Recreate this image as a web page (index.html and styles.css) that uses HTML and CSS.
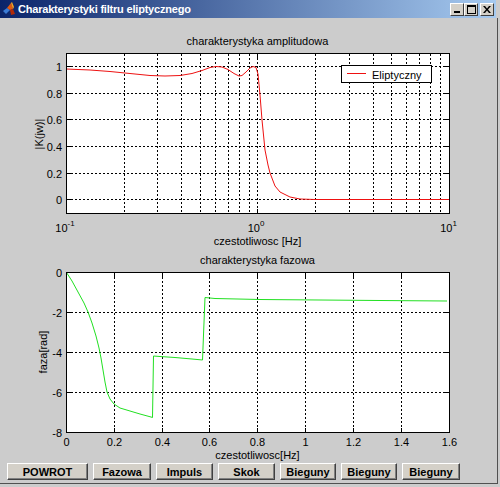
FILE: index.html
```html
<!DOCTYPE html>
<html lang="pl">
<head>
    <meta charset="UTF-8">
    <title>Charakterystyki filtru eliptycznego</title>
    <link rel="stylesheet" href="styles.css">
</head>
<body>
    <div class="window">
        <div class="titlebar">
            <svg class="app-icon" width="14" height="14" viewBox="0 0 14 14">
                <polygon points="1,9 5,6 8,8 4,12" fill="#3a7bd5"/>
                <polygon points="5,6 9,1 11,7 8,8" fill="#e05a10"/>
                <polygon points="8,8 11,7 13,12 9,13" fill="#b02a08"/>
                <polygon points="9,1 10,0 12,5 11,7" fill="#f5a623"/>
            </svg>
            <span class="title">Charakterystyki filtru eliptycznego</span>
            <div class="caption-buttons">
                <span class="cap-btn"><svg width="8" height="7" viewBox="0 0 8 7"><rect x="1" y="5" width="6" height="2" fill="#000"/></svg></span>
                <span class="cap-btn"><svg width="9" height="9" viewBox="0 0 9 9"><rect x="0.5" y="0.5" width="8" height="8" fill="none" stroke="#000"/><rect x="0" y="0" width="9" height="2" fill="#000"/></svg></span>
                <span class="cap-btn close"><svg width="8" height="7" viewBox="0 0 8 7"><path d="M0 0h2l2 2.5 2-2.5h2l-3 3.5 3 3.5h-2l-2-2.5-2 2.5h-2l3-3.5z" fill="#000"/></svg></span>
            </div>
        </div>

        <div class="figure">
            <svg class="plots" width="497" height="443" viewBox="0 18 497 443">
                <!-- amplitude axes -->
                <rect class="axes-bg" x="66.5" y="53.5" width="383" height="160"/>
                <g class="grid">
                    <line x1="124.5" y1="54" x2="124.5" y2="213"/>
                    <line x1="157.5" y1="54" x2="157.5" y2="213"/>
                    <line x1="181.5" y1="54" x2="181.5" y2="213"/>
                    <line x1="200.5" y1="54" x2="200.5" y2="213"/>
                    <line x1="215.5" y1="54" x2="215.5" y2="213"/>
                    <line x1="228.5" y1="54" x2="228.5" y2="213"/>
                    <line x1="239.5" y1="54" x2="239.5" y2="213"/>
                    <line x1="249.5" y1="54" x2="249.5" y2="213"/>
                    <line x1="257.5" y1="54" x2="257.5" y2="213"/>
                    <line x1="315.5" y1="54" x2="315.5" y2="213"/>
                    <line x1="349.5" y1="54" x2="349.5" y2="213"/>
                    <line x1="373.5" y1="54" x2="373.5" y2="213"/>
                    <line x1="391.5" y1="54" x2="391.5" y2="213"/>
                    <line x1="406.5" y1="54" x2="406.5" y2="213"/>
                    <line x1="419.5" y1="54" x2="419.5" y2="213"/>
                    <line x1="430.5" y1="54" x2="430.5" y2="213"/>
                    <line x1="440.5" y1="54" x2="440.5" y2="213"/>
                    <line x1="67" y1="66.5" x2="449" y2="66.5"/>
                    <line x1="67" y1="93.5" x2="449" y2="93.5"/>
                    <line x1="67" y1="119.5" x2="449" y2="119.5"/>
                    <line x1="67" y1="146.5" x2="449" y2="146.5"/>
                    <line x1="67" y1="173.5" x2="449" y2="173.5"/>
                    <line x1="67" y1="199.5" x2="449" y2="199.5"/>
                </g>
                <g class="ticks">
                    <path d="M257.5 213v-4M257.5 54v4M67 66.5h4M449 66.5h-4M67 93.5h4M449 93.5h-4M67 119.5h4M449 119.5h-4M67 146.5h4M449 146.5h-4M67 173.5h4M449 173.5h-4M67 199.5h4M449 199.5h-4"/>
                </g>
                <polyline class="amp" points="66,69 90,70 110,71.5 130,73.5 150,75.5 165,76 180,75.5 192,73.5 202,70.5 210,67.5 216,66.5 222,67 228,69.5 234,73.5 239,76 242,75.5 246,72 250,68 253,66.5 256,67.5 258,74 260,95 262,120 265,150 268,165 270,173 275,186 280,192 290,197 300,199 315,199.5 449,199.5"/>
                <rect class="frame" x="66.5" y="53.5" width="383" height="160"/>

                <!-- legend -->
                <rect class="legend-box" x="341.5" y="65.5" width="90" height="17"/>
                <line class="amp" x1="347" y1="73.5" x2="366" y2="73.5"/>
                <text x="372" y="78.5">Eliptyczny</text>

                <text x="257.5" y="45" text-anchor="middle">charakterystyka amplitudowa</text>
                <g text-anchor="end">
                    <text x="62" y="70.5">1</text>
                    <text x="62" y="97.5">0.8</text>
                    <text x="62" y="123.5">0.6</text>
                    <text x="62" y="150.5">0.4</text>
                    <text x="62" y="177.5">0.2</text>
                    <text x="62" y="203.5">0</text>
                </g>
                <g text-anchor="middle">
                    <text x="65" y="232">10<tspan class="sup" dy="-6">-1</tspan></text>
                    <text x="256" y="232">10<tspan class="sup" dy="-6">0</tspan></text>
                    <text x="448.5" y="232">10<tspan class="sup" dy="-6">1</tspan></text>
                    <text x="257.5" y="245">czestotliwosc [Hz]</text>
                    <text transform="translate(43 134) rotate(-90)">|K(jw)|</text>
                </g>

                <!-- phase axes -->
                <rect class="axes-bg" x="66.5" y="272.5" width="383" height="160"/>
                <g class="grid">
                    <line x1="114.5" y1="273" x2="114.5" y2="432"/>
                    <line x1="162.5" y1="273" x2="162.5" y2="432"/>
                    <line x1="209.5" y1="273" x2="209.5" y2="432"/>
                    <line x1="257.5" y1="273" x2="257.5" y2="432"/>
                    <line x1="305.5" y1="273" x2="305.5" y2="432"/>
                    <line x1="353.5" y1="273" x2="353.5" y2="432"/>
                    <line x1="401.5" y1="273" x2="401.5" y2="432"/>
                    <line x1="67" y1="312.5" x2="449" y2="312.5"/>
                    <line x1="67" y1="352.5" x2="449" y2="352.5"/>
                    <line x1="67" y1="392.5" x2="449" y2="392.5"/>
                </g>
                <g class="ticks">
                    <path d="M114.5 432v-4M162.5 432v-4M209.5 432v-4M257.5 432v-4M305.5 432v-4M353.5 432v-4M401.5 432v-4M114.5 273v4M162.5 273v4M209.5 273v4M257.5 273v4M305.5 273v4M353.5 273v4M401.5 273v4M67 312.5h4M67 352.5h4M67 392.5h4M449 312.5h-4M449 352.5h-4M449 392.5h-4"/>
                </g>
                <polyline class="phase" points="66.5,272.5 72,281 78,292 84,303 88,312 92,323 96,336 99,348 101,358 103,370 105,382 107,392 110,399 114,404 120,408 130,411 140,414 151,417 152.5,417.5 153.5,356 160,356.5 175,357.5 192,359 202.5,360 205,297.5 215,298.5 260,299.5 320,300 380,300.5 447,301"/>
                <rect class="frame" x="66.5" y="272.5" width="383" height="160"/>

                <text x="257.5" y="264" text-anchor="middle">charakterystyka fazowa</text>
                <g text-anchor="end">
                    <text x="62" y="276.5">0</text>
                    <text x="62" y="316.5">-2</text>
                    <text x="62" y="356.5">-4</text>
                    <text x="62" y="396.5">-6</text>
                    <text x="62" y="436.5">-8</text>
                </g>
                <g text-anchor="middle">
                    <text x="66.5" y="446">0</text>
                    <text x="114.5" y="446">0.2</text>
                    <text x="162.5" y="446">0.4</text>
                    <text x="209.5" y="446">0.6</text>
                    <text x="257.5" y="446">0.8</text>
                    <text x="305.5" y="446">1</text>
                    <text x="353.5" y="446">1.2</text>
                    <text x="401.5" y="446">1.4</text>
                    <text x="449.5" y="446">1.6</text>
                    <text x="257.5" y="459">czestotliwosc[Hz]</text>
                    <text transform="translate(47 352) rotate(-90)">faza[rad]</text>
                </g>
            </svg>

            <div class="button-row">
                <button class="fig-btn w81">POWROT</button>
                <button class="fig-btn w58">Fazowa</button>
                <button class="fig-btn w57">Impuls</button>
                <button class="fig-btn w57">Skok</button>
                <button class="fig-btn w56">Bieguny</button>
                <button class="fig-btn w56">Bieguny</button>
                <button class="fig-btn w58">Bieguny</button>
            </div>
        </div>
    </div>
</body>
</html>
```

FILE: styles.css
```css
body {
    margin: 0;
    background-color: #cccccc;
    font-family: "Liberation Sans", Arial, sans-serif;
}

.window {
    width: 500px;
    height: 487px;
    background-color: #cccccc;
    overflow: hidden;
}

.titlebar {
    height: 18px;
    width: 496px;
    display: flex;
    align-items: center;
    background: linear-gradient(to right, #0a246a, #a6caf0);
    color: white;
}

.app-icon {
    margin-left: 2px;
    margin-right: 2px;
}

.title {
    font-size: 11px;
    font-weight: bold;
    white-space: nowrap;
    letter-spacing: -0.2px;
}

.caption-buttons {
    margin-left: auto;
    display: flex;
    margin-right: 2px;
}

.cap-btn {
    width: 12px;
    height: 11px;
    display: flex;
    align-items: center;
    justify-content: center;
    background-color: #d4d0c8;
    border-top: 1px solid #ffffff;
    border-left: 1px solid #ffffff;
    border-right: 1px solid #404040;
    border-bottom: 1px solid #404040;
}

.cap-btn.close {
    margin-left: 2px;
}

.figure {
    width: 497px;
    height: 465px;
    border-right: 1px solid #505050;
    border-bottom: 1px solid #505050;
}

.plots {
    display: block;
    font-family: "Liberation Sans", Arial, sans-serif;
    font-size: 11px;
}

.plots text {
    fill: #000;
}

.plots .sup {
    font-size: 8px;
}

.axes-bg {
    fill: #ffffff;
}

.grid line {
    stroke: #000;
    stroke-width: 1;
    stroke-dasharray: 2 2;
}

.ticks path {
    stroke: #000;
    fill: none;
}

.frame {
    stroke: #000;
    fill: none;
}

.legend-box {
    fill: #ffffff;
    stroke: #000;
}

.amp {
    fill: none;
    stroke: #ee1111;
    stroke-width: 1;
    stroke-linejoin: round;
}

.phase {
    fill: none;
    stroke: #22e022;
    stroke-width: 1;
    stroke-linejoin: round;
}

.button-row {
    display: flex;
    gap: 5px;
    padding-left: 7px;
    margin-top: 2px;
}

.fig-btn {
    height: 17px;
    padding: 0;
    font-family: "Liberation Sans", Arial, sans-serif;
    font-size: 11px;
    font-weight: bold;
    color: #000;
    background-color: #d4d0c8;
    border-top: 1px solid #ffffff;
    border-left: 1px solid #ffffff;
    border-right: 1px solid #404040;
    border-bottom: 1px solid #404040;
    box-shadow: inset -1px -1px 0 #808080;
}

.w81 { width: 81px; }
.w58 { width: 58px; }
.w57 { width: 57px; }
.w56 { width: 56px; }
```
